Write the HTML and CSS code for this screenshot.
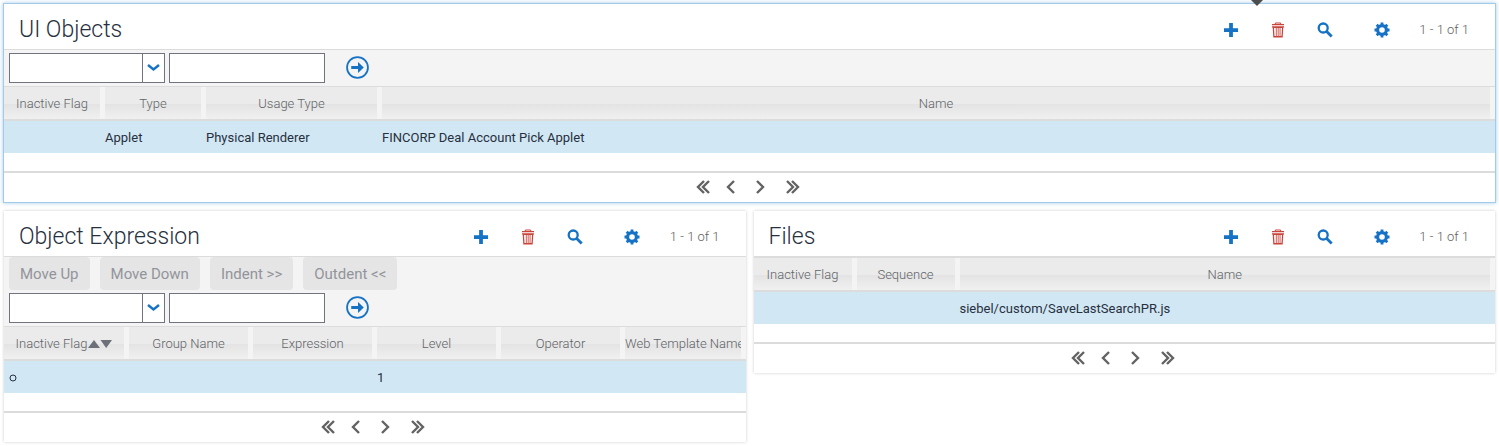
FILE: index.html
```html
<!DOCTYPE html>
<html lang="en">
<head>
<meta charset="utf-8">
<title>UI Objects</title>
<link rel="stylesheet" href="styles.css">
</head>
<body>
<svg class="sprite" aria-hidden="true">
  <symbol id="plus" viewBox="0 0 16 16"><path d="M6 .5h4V6h5.500v4H10v5.500H6V10H.5V6H6z" transform="translate(.5 .5) scale(.94)"/></symbol>
  <symbol id="trash" viewBox="0 0 16 16"><path fill-rule="evenodd" d="M5.500 .5h5l1 1.500H14v1.300H2V2h2.500zM6 1.400 5.600 2h4.800L10 1.400zM2 4.200h12v1.300h-.7L12.700 15.500H3.300L2.700 5.500H2zM4 6l.5 8h1.300V6zM6.700 6v8h1V6zM8.600 6v8h1V6zM10.500 6v8h1L12 6z"/></symbol>
  <symbol id="search" viewBox="0 0 16 16"><circle cx="6.200" cy="6" r="4.500" fill="none" stroke="currentColor" stroke-width="2.300"/><path d="m9.700 9.500 5 5" fill="none" stroke="currentColor" stroke-width="2.800"/></symbol>
  <symbol id="gear" viewBox="0 0 16 16"><circle cx="8" cy="8" r="4.400" fill="none" stroke="currentColor" stroke-width="3.200"/><path d="M8 .5v3M8 12.500v3M.5 8h3M12.500 8h3M2.700 2.700l2 2M11.300 11.300l2 2M2.700 13.300l2-2M11.300 4.700l2-2" fill="none" stroke="currentColor" stroke-width="2.800"/></symbol>
  <symbol id="go" viewBox="0 0 22 22"><circle cx="11" cy="11" r="10" fill="none" stroke="currentColor" stroke-width="1.700"/><path d="M5 9.500h6.500V5.800L17 11l-5.500 5.200v-3.700H5z"/></symbol>
  <symbol id="first" viewBox="0 0 30 14"><path d="m17 1-6 6 6 6M22 1l-6 6 6 6"/></symbol>
  <symbol id="prev" viewBox="0 0 30 14"><path d="m17 1-6 6 6 6"/></symbol>
  <symbol id="next" viewBox="0 0 30 14"><path d="m10 1 6 6-6 6"/></symbol>
  <symbol id="last" viewBox="0 0 30 14"><path d="m10 1 6 6-6 6M15 1l6 6-6 6"/></symbol>
</svg>

<main class="page">
  <span class="pointer" aria-hidden="true"></span>

  <section class="panel panel-active">
    <header class="panel-head">
      <h2 class="title">UI Objects</h2>
      <button class="icon-btn" aria-label="New"><svg class="icon"><use href="#plus"/></svg></button>
      <button class="icon-btn danger" aria-label="Delete"><svg class="icon"><use href="#trash"/></svg></button>
      <button class="icon-btn" aria-label="Query"><svg class="icon"><use href="#search"/></svg></button>
      <button class="icon-btn settings" aria-label="Settings"><svg class="icon"><use href="#gear"/></svg></button>
      <span class="count">1 - 1 of 1</span>
    </header>
    <form class="find">
      <select class="field select" aria-label="Find field"><option></option></select>
      <input class="field" type="text" aria-label="Starting with">
      <button class="go" type="button" aria-label="Go"><svg class="go-icon"><use href="#go"/></svg></button>
    </form>
    <div class="grid">
      <table class="list">
        <colgroup><col class="col-flag"><col class="col-type"><col class="col-usage"><col></colgroup>
        <thead><tr><th>Inactive Flag</th><th>Type</th><th>Usage Type</th><th>Name</th></tr></thead>
        <tbody><tr><td></td><td>Applet</td><td>Physical Renderer</td><td>FINCORP Deal Account Pick Applet</td></tr></tbody>
      </table>
    </div>
    <nav class="pager" aria-label="UI Objects pages">
      <button class="page-btn" aria-label="First"><svg class="page-icon"><use href="#first"/></svg></button>
      <button class="page-btn" aria-label="Previous"><svg class="page-icon"><use href="#prev"/></svg></button>
      <button class="page-btn" aria-label="Next"><svg class="page-icon"><use href="#next"/></svg></button>
      <button class="page-btn" aria-label="Last"><svg class="page-icon"><use href="#last"/></svg></button>
    </nav>
  </section>

  <div class="columns">
    <section class="panel">
      <header class="panel-head">
        <h2 class="title">Object Expression</h2>
        <button class="icon-btn" aria-label="New"><svg class="icon"><use href="#plus"/></svg></button>
        <button class="icon-btn danger" aria-label="Delete"><svg class="icon"><use href="#trash"/></svg></button>
        <button class="icon-btn" aria-label="Query"><svg class="icon"><use href="#search"/></svg></button>
        <button class="icon-btn settings" aria-label="Settings"><svg class="icon"><use href="#gear"/></svg></button>
        <span class="count">1 - 1 of 1</span>
      </header>
      <div class="actions">
        <button class="action" disabled>Move Up</button>
        <button class="action" disabled>Move Down</button>
        <button class="action" disabled>Indent &gt;&gt;</button>
        <button class="action" disabled>Outdent &lt;&lt;</button>
      </div>
      <form class="find">
        <select class="field select" aria-label="Find field"><option></option></select>
        <input class="field" type="text" aria-label="Starting with">
        <button class="go" type="button" aria-label="Go"><svg class="go-icon"><use href="#go"/></svg></button>
      </form>
      <div class="grid">
        <table class="list">
          <colgroup><col class="col-sorted"><col class="col-expression" span="4"><col></colgroup>
          <thead><tr><th>Inactive Flag<svg class="sort" viewBox="0 0 24 8" aria-hidden="true"><path d="M0 8 6 0l6 8zM12.500 0h11.500l-5.800 8z"/></svg></th><th>Group Name</th><th>Expression</th><th>Level</th><th>Operator</th><th>Web Template Name</th></tr></thead>
          <tbody><tr><td><svg class="flag" viewBox="0 0 8 8" role="img" aria-label="Not inactive"><circle cx="4" cy="4" r="3"/></svg></td><td></td><td></td><td>1</td><td></td><td></td></tr></tbody>
        </table>
      </div>
      <nav class="pager" aria-label="Object Expression pages">
        <button class="page-btn" aria-label="First"><svg class="page-icon"><use href="#first"/></svg></button>
        <button class="page-btn" aria-label="Previous"><svg class="page-icon"><use href="#prev"/></svg></button>
        <button class="page-btn" aria-label="Next"><svg class="page-icon"><use href="#next"/></svg></button>
        <button class="page-btn" aria-label="Last"><svg class="page-icon"><use href="#last"/></svg></button>
      </nav>
    </section>

    <section class="panel">
      <header class="panel-head">
        <h2 class="title">Files</h2>
        <button class="icon-btn" aria-label="New"><svg class="icon"><use href="#plus"/></svg></button>
        <button class="icon-btn danger" aria-label="Delete"><svg class="icon"><use href="#trash"/></svg></button>
        <button class="icon-btn" aria-label="Query"><svg class="icon"><use href="#search"/></svg></button>
        <button class="icon-btn settings" aria-label="Settings"><svg class="icon"><use href="#gear"/></svg></button>
        <span class="count">1 - 1 of 1</span>
      </header>
      <div class="grid">
        <table class="list">
          <colgroup><col class="col-file" span="2"><col></colgroup>
          <thead><tr><th>Inactive Flag</th><th>Sequence</th><th>Name</th></tr></thead>
          <tbody><tr><td></td><td></td><td>siebel/custom/SaveLastSearchPR.js</td></tr></tbody>
        </table>
      </div>
      <nav class="pager" aria-label="Files pages">
        <button class="page-btn" aria-label="First"><svg class="page-icon"><use href="#first"/></svg></button>
        <button class="page-btn" aria-label="Previous"><svg class="page-icon"><use href="#prev"/></svg></button>
        <button class="page-btn" aria-label="Next"><svg class="page-icon"><use href="#next"/></svg></button>
        <button class="page-btn" aria-label="Last"><svg class="page-icon"><use href="#last"/></svg></button>
      </nav>
    </section>
  </div>
</main>
</body>
</html>
```
FILE: styles.css
```css
* { box-sizing: border-box; }

body {
  margin: 0;
  background: #fff;
  color: #26303e;
  font: 13px/16px Roboto, "Open Sans", sans-serif;
}

button {
  border: 0;
  padding: 0;
  background: none;
  font: inherit;
}

.sprite { position: absolute; width: 0; height: 0; }

.page {
  position: relative;
  display: flex;
  flex-direction: column;
  gap: 9px;
  padding: 4px;
}

.pointer {
  position: absolute;
  top: 0;
  right: 236px;
  border: 6px solid transparent;
  border-top-color: #4d4d4d;
  border-bottom: 0;
}

.columns {
  display: grid;
  grid-template-columns: repeat(2, minmax(0, 1fr));
  align-items: start;
  gap: 8px;
}

.panel {
  background: #fff;
  box-shadow: 0 0 3px rgba(0, 0, 0, .2);
}

.panel-active { box-shadow: 0 0 0 1px #a3cbe8, 0 0 4px 1px #a3cbe8; }

.panel-head {
  display: flex;
  align-items: center;
  height: 46px;
  padding: 7px 26px 0 15px;
  border-bottom: 1px solid #dcdcdc;
}

.title {
  flex: 1;
  margin: 0;
  font-size: 23px;
  line-height: 32px;
  font-weight: 300;
}

.icon-btn {
  display: flex;
  justify-content: center;
  width: 47px;
  color: #1672c4;
}

.danger { color: #c9453c; }
.settings { margin-left: 10px; }

.icon { width: 16px; height: 16px; fill: currentColor; }

.count { margin-left: 14px; color: #606060; font-weight: 300; }

.actions {
  display: flex;
  gap: 10px;
  padding: 0 5px;
  background: #f4f4f4;
}

.action {
  height: 33px;
  padding: 0 11px;
  border-radius: 4px;
  background: #e5e5e5;
  color: #92949b;
  font-size: 15px;
}

.find {
  display: flex;
  align-items: center;
  gap: 4px;
  padding: 3px 5px;
  background: #f4f4f4;
}

.field {
  width: 156px;
  height: 30px;
  padding: 0 4px;
  border: 1px solid #6f747f;
  border-radius: 0;
  background-color: #fff;
  font: inherit;
}

.select {
  appearance: none;
  background-image:
    url("data:image/svg+xml,%3Csvg xmlns='http://www.w3.org/2000/svg' width='22' height='28'%3E%3Cpath d='M.5 0v28' stroke='%236f747f'/%3E%3Cpath d='m6 11 5.500 4.500 5.500-4.500' fill='none' stroke='%231672c4' stroke-width='2.400'/%3E%3C/svg%3E");
  background-repeat: no-repeat;
  background-position: right center;
}

.go { display: flex; margin: 0 0 2px 17px; color: #1672c4; }
.go-icon { width: 23px; height: 23px; fill: currentColor; }

.grid {
  padding-bottom: 18px;
  border-top: 1px solid #dcdcdc;
  border-bottom: 2px solid #dcdcdc;
}

.list {
  width: 100%;
  table-layout: fixed;
  border-collapse: separate;
  border-spacing: 0;
}

.col-flag { width: 101px; }
.col-type { width: 101px; }
.col-usage { width: 176px; }
.col-sorted { width: 125px; }
.col-expression { width: 124px; }
.col-file { width: 103px; }

.list th {
  height: 32px;
  padding: 2px 0 0;
  overflow: hidden;
  border-right: 5px solid #f4f4f4;
  background: linear-gradient(#ebebeb 0 52%, #e3e3e3 52%, #f0f0f0);
  color: #606367;
  font-weight: 300;
  text-align: center;
  white-space: nowrap;
}

.list td {
  height: 34px;
  padding: 2px 0 0;
  border-top: 2px solid #dcdcdc;
  background: #d2e7f4;
  white-space: nowrap;
}

.list td:first-child { padding-left: 5px; }

.sort { width: 24px; height: 8px; margin-left: 1px; fill: #6b7079; }
.flag { display: block; width: 8px; height: 8px; fill: none; stroke: #26303e; }

.pager {
  display: flex;
  justify-content: center;
  padding: 7px 5px 8px 0;
}

.page-btn { display: flex; }

.page-icon {
  width: 30px;
  height: 14px;
  fill: none;
  stroke: #636363;
  stroke-width: 2.4;
}
```
